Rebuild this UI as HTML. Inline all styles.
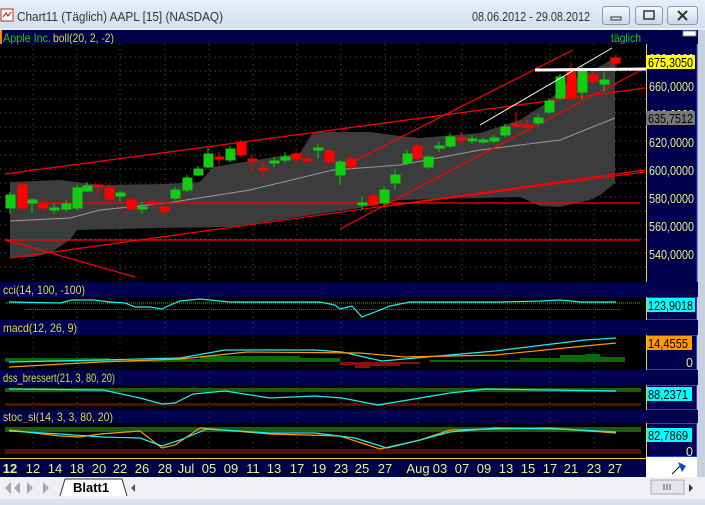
<!DOCTYPE html>
<html><head><meta charset="utf-8">
<style>
html,body{margin:0;padding:0;width:705px;height:505px;overflow:hidden;background:#dce6f2;font-family:"Liberation Sans",sans-serif}
svg{display:block}
</style></head><body>
<svg width="705" height="505" viewBox="0 0 705 505" xmlns="http://www.w3.org/2000/svg" font-family="Liberation Sans, sans-serif">
<defs>
<linearGradient id="tb" x1="0" y1="0" x2="0" y2="1"><stop offset="0" stop-color="#e6eef8"/><stop offset="1" stop-color="#d3dfee"/></linearGradient>
<linearGradient id="bt" x1="0" y1="0" x2="0" y2="1"><stop offset="0" stop-color="#f6f9fc"/><stop offset="1" stop-color="#c9d6e6"/></linearGradient>
</defs>
<rect x="0" y="0" width="705" height="29" fill="url(#tb)"/>
<rect x="1" y="9" width="12" height="12" fill="#fff" stroke="#a33" stroke-width="1"/>
<path d="M3 17 L6 13 L8 16 L11 12" stroke="#c00" fill="none"/>
<text x="17" y="21" font-size="13" fill="#333" textLength="206" lengthAdjust="spacingAndGlyphs">Chart11 (Täglich)  AAPL [15] (NASDAQ)</text>
<text x="472" y="21" font-size="13" fill="#333" textLength="118" lengthAdjust="spacingAndGlyphs">08.06.2012 - 29.08.2012</text>
<g stroke="#8a9bb0" fill="url(#bt)"><rect x="602.5" y="6.5" width="27" height="18" rx="3"/><rect x="635.5" y="6.5" width="27" height="18" rx="3"/><rect x="667.5" y="6.5" width="30" height="18" rx="3"/></g>
<rect x="611" y="17" width="10" height="3" fill="none" stroke="#333"/>
<rect x="644" y="11" width="10" height="8" fill="none" stroke="#333" stroke-width="1.5"/>
<path d="M678 11 L687 20 M687 11 L678 20" stroke="#333" stroke-width="2"/>
<rect x="0" y="28" width="705" height="2" fill="#e9eef5"/>
<rect x="697" y="30" width="8" height="447" fill="#c8d2de"/>
<rect x="0" y="30" width="698" height="14" fill="#00004a"/>
<rect x="0" y="30" width="2" height="14" fill="#f80"/>
<text x="3" y="42" font-size="12" fill="#1c1" textLength="48" lengthAdjust="spacingAndGlyphs">Apple Inc.</text><text x="53" y="42" font-size="12" fill="#dd3" textLength="61" lengthAdjust="spacingAndGlyphs">boll(20, 2, -2)</text>
<text x="611" y="42" font-size="12" fill="#1c1" textLength="30" lengthAdjust="spacingAndGlyphs">täglich</text>
<rect x="683" y="31" width="13" height="5" fill="#fff" stroke="#889"/>
<rect x="0" y="44" width="646" height="238" fill="#000"/>
<rect x="646" y="44" width="51" height="238" fill="#000050"/>
<g stroke="#555" stroke-dasharray="1,4">
<path d="M0 57H646M0 85H646M0 113H646M0 141H646M0 169H646M0 197H646M0 225H646M0 253H646M0 71H646M0 99H646M0 127H646M0 155H646M0 183H646M0 211H646M0 239H646M0 267H646"/>
<path d="M33 44V282M77 44V282M120 44V282M165 44V282M209 44V282M253 44V282M297 44V282M341 44V282M385 44V282M418 44V282M462 44V282M506 44V282M550 44V282M594 44V282"/>
</g>
<polygon points="10,182 60,180 100,185 165,184 200,182 213,167 300,153 313,132 370,132 400,136 420,138 480,133 520,120 545,104 565,85 615,58 615,183 600,195 590,200 560,207 540,206 520,197 400,200 360,208 230,227 160,228 77,230 70,240 50,253 33,257 10,257" fill="#3c3c3c"/>
<polyline points="10,221 70,218 100,210 167,203 250,190 333,170 400,165 480,150 560,140 615,118" fill="none" stroke="#999" stroke-width="1"/>
<g stroke="#f00" stroke-width="1.2" fill="none">
<path d="M5 240H640"/>
<path d="M5 203H640"/>
<path d="M5 174L645 88"/>
<path d="M340 229L645 68"/>
<path d="M340 168L573 50"/>
<path d="M10 258L645 170"/>
<path d="M5 240L135 277"/>
<path d="M380 207L645 172"/>
</g>
<g stroke-width="1">
<g fill="#1c1" stroke="#1c1">
<rect x="6" y="195" width="9" height="13"/><path d="M10 192V214M32 198V213M77 185V210M87 182V192M120 191V202M142 202V214M54 203V214M66 200V212M175 187V200M187 175V192M198 166V176M208 148V168M230 146V162M274 157V167M285 152V163M318 144V159M340 160V185M362 196V210M384 186V205M395 169V190M407 150V165M428 155V169M439 142V152M450 133V148M472 135V144M483 138V144M494 135V143M505 124V137M538 114V125M549 98V114M582 66V100M604 73V92"/>
<rect x="28" y="200" width="9" height="3"/><rect x="50" y="208" width="9" height="2"/><rect x="62" y="204" width="9" height="5"/><rect x="73" y="188" width="9" height="20"/><rect x="83" y="186" width="9" height="5"/><rect x="116" y="193" width="9" height="3"/><rect x="138" y="207" width="9" height="2"/><rect x="171" y="190" width="9" height="8"/><rect x="183" y="178" width="9" height="12"/><rect x="194" y="169" width="9" height="6"/><rect x="204" y="154" width="9" height="13"/><rect x="226" y="149" width="9" height="11"/><rect x="270" y="161" width="9" height="2"/><rect x="281" y="157" width="9" height="3"/><rect x="314" y="148" width="9" height="2"/><rect x="336" y="162" width="9" height="13"/><rect x="358" y="203" width="9" height="2"/><rect x="380" y="190" width="9" height="13"/><rect x="391" y="175" width="9" height="8"/><rect x="403" y="154" width="9" height="9"/><rect x="424" y="157" width="9" height="10"/><rect x="435" y="146" width="9" height="2"/><rect x="446" y="137" width="9" height="9"/><rect x="468" y="139" width="9" height="2"/><rect x="479" y="140" width="9" height="2"/><rect x="490" y="138" width="9" height="3"/><rect x="501" y="127" width="9" height="8"/><rect x="534" y="118" width="9" height="5"/><rect x="545" y="101" width="9" height="11"/><rect x="556" y="77" width="9" height="21"/><rect x="578" y="70" width="9" height="22"/><rect x="600" y="80" width="9" height="4"/>
<path d="M560 74V100"/>
</g>
<g fill="#f00" stroke="#f00">
<rect x="18" y="185" width="9" height="23"/><path d="M22 183V210M43 197V212M98 184V196M109 184V200M131 197V210M153 198V207M164 204V215M219 152V165M241 140V157M252 155V172M263 162V178M296 151V164M307 154V164M329 149V164M351 155V170M373 194V207M417 144V160M461 132V144M516 112V127M527 119V129M571 63V100M593 70V84M616 54V67"/>
<rect x="39" y="203" width="9" height="5"/><rect x="94" y="185" width="9" height="2"/><rect x="105" y="188" width="9" height="11"/><rect x="127" y="200" width="9" height="9"/><rect x="149" y="202" width="9" height="2"/><rect x="160" y="207" width="9" height="4"/><rect x="215" y="157" width="9" height="2"/><rect x="237" y="142" width="9" height="13"/><rect x="248" y="159" width="9" height="2"/><rect x="259" y="168" width="9" height="2"/><rect x="292" y="154" width="9" height="5"/><rect x="303" y="159" width="9" height="2"/><rect x="325" y="151" width="9" height="11"/><rect x="347" y="159" width="9" height="8"/><rect x="369" y="196" width="9" height="9"/><rect x="413" y="146" width="9" height="12"/><rect x="457" y="138" width="9" height="2"/><rect x="512" y="124" width="9" height="2"/><rect x="523" y="125" width="9" height="2"/><rect x="567" y="72" width="9" height="26"/><rect x="589" y="75" width="9" height="6"/><rect x="611" y="58" width="9" height="5"/>
</g>
</g>
<path d="M480 125L612 48" stroke="#fff" stroke-width="1"/>
<path d="M535 70L646 69" stroke="#fff" stroke-width="3"/>
<path d="M646.5 44V282" stroke="#ec3"/>
<path d="M697 44V282" stroke="#24c"/>
<g font-size="12.5" fill="#ee8">
<text x="649" y="63" textLength="45" lengthAdjust="spacingAndGlyphs">680,0000</text><text x="649" y="91" textLength="45" lengthAdjust="spacingAndGlyphs">660,0000</text><text x="649" y="119" textLength="45" lengthAdjust="spacingAndGlyphs">640,0000</text><text x="649" y="147" textLength="45" lengthAdjust="spacingAndGlyphs">620,0000</text><text x="649" y="175" textLength="45" lengthAdjust="spacingAndGlyphs">600,0000</text><text x="649" y="203" textLength="45" lengthAdjust="spacingAndGlyphs">580,0000</text><text x="649" y="231" textLength="45" lengthAdjust="spacingAndGlyphs">560,0000</text><text x="649" y="259" textLength="45" lengthAdjust="spacingAndGlyphs">540,0000</text>
</g>
<rect x="646" y="55" width="49" height="14" fill="#ff0"/><text x="648" y="67" font-size="12.5" fill="#000" textLength="45" lengthAdjust="spacingAndGlyphs">675,3050</text>
<rect x="646" y="111" width="49" height="14" fill="#777"/><text x="648" y="123" font-size="12.5" fill="#000" textLength="45" lengthAdjust="spacingAndGlyphs">635,7512</text>
<g fill="#000050"><rect x="0" y="282" width="698" height="15"/><rect x="0" y="320" width="698" height="15"/><rect x="0" y="370" width="698" height="15"/><rect x="0" y="410" width="698" height="13"/></g>
<g font-size="12" fill="#dd3"><text x="3" y="294" textLength="82" lengthAdjust="spacingAndGlyphs">cci(14, 100, -100)</text><text x="3" y="332" textLength="74" lengthAdjust="spacingAndGlyphs">macd(12, 26, 9)</text><text x="3" y="382" textLength="112" lengthAdjust="spacingAndGlyphs">dss_bressert(21, 3, 80, 20)</text><text x="3" y="421" textLength="110" lengthAdjust="spacingAndGlyphs">stoc_sl(14, 3, 3, 80, 20)</text></g>
<g fill="#000"><rect x="0" y="297" width="646" height="23"/><rect x="0" y="335" width="646" height="35"/><rect x="0" y="385" width="646" height="25"/><rect x="0" y="423" width="646" height="34"/></g>
<g fill="#000050" stroke="#24c"><rect x="646.5" y="297.5" width="50" height="22"/><rect x="646.5" y="335.5" width="50" height="34"/><rect x="646.5" y="385.5" width="50" height="24"/><rect x="646.5" y="423.5" width="50" height="33"/></g>
<g stroke="#ec3"><path d="M646.5 297V320M646.5 335V370M646.5 385V410M646.5 423V457"/></g>
<g stroke="#444" stroke-dasharray="1,4"><path d="M33 297V457M77 297V457M120 297V457M165 297V457M209 297V457M253 297V457M297 297V457M341 297V457M385 297V457M418 297V457M462 297V457M506 297V457M550 297V457M594 297V457"/></g>
<path d="M5 303H640" stroke="#3a3" stroke-dasharray="1,1"/>
<path d="M25 309.5H620" stroke="#d22" stroke-dasharray="1,1"/>
<polyline points="9,302 60,303 72,300 94,300 110,302 125,303 135,307 150,307 162,309 168,306 180,301 200,299 230,302 280,302 320,302 335,305 340,309 352,306 362,317 375,312 390,306 410,302 450,302 500,302 540,301 560,300 580,302 616,302" fill="none" stroke="#2ee" stroke-width="1.2"/>
<rect x="647" y="298" width="48" height="14" fill="#0ff"/><text x="648" y="310" font-size="12.5" fill="#000" textLength="45" lengthAdjust="spacingAndGlyphs">123,9018</text>
<path d="M5 362 L5 358 H110 V360 H170 V359 H200 V356 H300 V358 H340 V362 Z M430 362 V360 H520 V358 H560 V355 H585 V354 H600 V357 H625 V362 Z" fill="#0a6a0a"/>
<path d="M340 362 H420 V364 H400 V366 H370 V368 H355 V365 H340 Z" fill="#8a1010"/>
<polyline points="9,362 100,360 180,358 225,350 315,350 342,352 382,361 427,357 495,351 585,340 616,338" fill="none" stroke="#2ee" stroke-width="1.2"/>
<polyline points="9,367 100,362 180,359 247,352 360,353 405,357 495,355 585,346 616,343" fill="none" stroke="#f90" stroke-width="1.2"/>
<rect x="647" y="336" width="45" height="14" fill="#f90"/><text x="648" y="348" font-size="12.5" fill="#000" textLength="40" lengthAdjust="spacingAndGlyphs">14,4555</text>
<text x="686" y="367" font-size="12.5" fill="#ee8">0</text>
<rect x="5" y="388" width="636" height="4" fill="#1e5a10"/><rect x="5" y="403" width="636" height="3" fill="#5a0c0c"/>
<polyline points="9,389 103,390 140,398 162,404 175,403 193,394 225,391 270,398 315,396 342,398 378,405 450,393 486,389 616,391" fill="none" stroke="#2ee" stroke-width="1.2"/>
<rect x="647" y="387" width="45" height="14" fill="#0ff"/><text x="648" y="399" font-size="12.5" fill="#000" textLength="40" lengthAdjust="spacingAndGlyphs">88,2371</text>
<rect x="5" y="427" width="636" height="5" fill="#1e5a10"/><rect x="5" y="449" width="636" height="5" fill="#5a0c0c"/>
<polyline points="9,430 60,436 80,437 100,434 140,431 162,448 175,445 200,428 270,434 340,436 380,449 420,440 450,430 495,429 550,428 616,433" fill="none" stroke="#f90" stroke-width="1.2"/>
<polyline points="9,431 60,434 103,437 140,438 162,446 180,440 207,429 270,433 315,433 355,438 387,448 420,440 450,432 495,428 560,429 616,432" fill="none" stroke="#2ee" stroke-width="1.2"/>
<rect x="647" y="428" width="45" height="14" fill="#0ff"/><text x="648" y="440" font-size="12.5" fill="#000" textLength="40" lengthAdjust="spacingAndGlyphs">82,7869</text>
<text x="686" y="456" font-size="12.5" fill="#ee8">0</text>
<rect x="0" y="457" width="646" height="20" fill="#00004a"/>
<path d="M0 458.5H646" stroke="#ec3"/>
<rect x="646" y="457" width="51" height="20" fill="#fff"/>
<path d="M672 474L682 464" stroke="#000"/><path d="M678 462L686 466L682 472Z" fill="#14c"/>
<g font-size="13" fill="#ee8" text-anchor="middle">
<text x="10" y="473" font-weight="bold">12</text><text x="33" y="473">12</text><text x="55" y="473">14</text><text x="77" y="473">18</text><text x="99" y="473">20</text><text x="120" y="473">22</text><text x="142" y="473">26</text><text x="165" y="473">28</text><text x="186" y="473">Jul</text><text x="209" y="473">05</text><text x="231" y="473">09</text><text x="253" y="473">11</text><text x="274" y="473">13</text><text x="297" y="473">17</text><text x="319" y="473">19</text><text x="341" y="473">23</text><text x="362" y="473">25</text><text x="385" y="473">27</text><text x="418" y="473">Aug</text><text x="440" y="473">03</text><text x="462" y="473">07</text><text x="484" y="473">09</text><text x="506" y="473">13</text><text x="528" y="473">15</text><text x="550" y="473">17</text><text x="571" y="473">21</text><text x="594" y="473">23</text><text x="615" y="473">27</text>
</g>
<rect x="0" y="477" width="705" height="22" fill="#eef0f4"/>
<rect x="0" y="499" width="705" height="6" fill="#d6e2ef"/>
<g fill="#aaa"><path d="M3 481V495M5 488L11 482V494Z M14 488L20 482V494Z M27 482L33 488L27 494Z M43 482L49 488L43 494Z M51 481V495"/></g>
<path d="M60 496L65 479H122L127 496" fill="#fff" stroke="#333"/>
<text x="73" y="492" font-size="13" font-weight="bold" fill="#000">Blatt1</text>
<path d="M135 484L131 488L135 492Z" fill="#555"/>
<rect x="651" y="480" width="33" height="14" fill="#e4e6ea" stroke="#aaa"/><path d="M664 484V490M667 484V490M670 484V490" stroke="#555"/>
<path d="M689 484L693 488L689 492Z" fill="#333"/>
</svg>
</body></html>
